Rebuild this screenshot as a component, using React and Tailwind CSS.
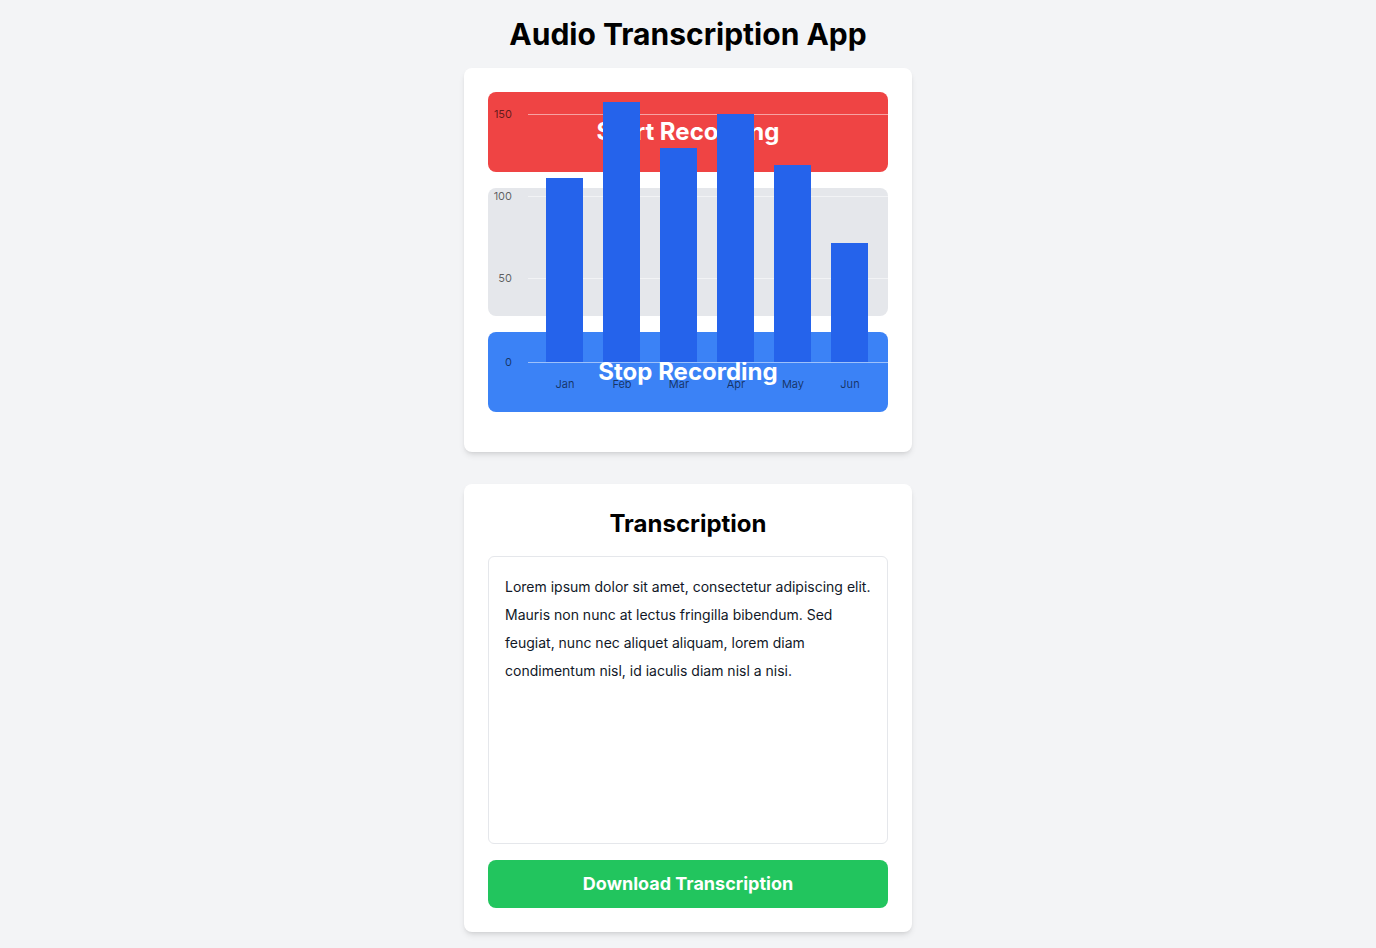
import React from 'react';

const months = [
  { label: 'Jan', x: 58, top: 86 },
  { label: 'Feb', x: 115, top: 10 },
  { label: 'Mar', x: 172, top: 56 },
  { label: 'Apr', x: 229, top: 22 },
  { label: 'May', x: 286, top: 73 },
  { label: 'Jun', x: 343, top: 151 },
];

const ticks = [
  { v: '150', y: 22 },
  { v: '100', y: 104 },
  { v: '50', y: 186 },
  { v: '0', y: 270 },
];

const Chart = () => (
  <svg width="400" height="300" className="absolute top-0 left-0 pointer-events-none">
    {ticks.map(t => (
      <g key={t.v}>
        <line x1="40" x2="400" y1={t.y + 0.5} y2={t.y + 0.5} stroke="#ffffff" strokeOpacity="0.5" strokeWidth="1" />
        <text x="24" y={t.y + 1} textAnchor="end" dominantBaseline="middle" fontSize="11" fill="#000" fillOpacity="0.6" fontFamily="Inter, sans-serif">{t.v}</text>
      </g>
    ))}
    {months.map(m => (
      <g key={m.label}>
        <rect x={m.x} y={m.top} width="37" height={270 - m.top} fill="#2563eb" />
        <text x={m.x + 19} y="293" textAnchor="middle" dominantBaseline="middle" fontSize="11" fill="#000" fillOpacity="0.6" fontFamily="Inter, sans-serif">{m.label}</text>
      </g>
    ))}
  </svg>
);

export default function App() {
  return (
    <div className="min-h-screen bg-[#f3f4f6] px-4 pt-4 pb-4 flex flex-col items-center" style={{ fontFamily: 'Inter, "Noto Sans", sans-serif' }}>
      <h1 className="text-3xl font-bold text-black mb-4">Audio Transcription App</h1>

      <div className="w-[448px] bg-white rounded-lg shadow-md p-6 pb-10 mb-8">
        <div className="relative flex flex-col gap-4">
          <button className="h-20 w-full rounded-lg bg-[#ef4444] text-white text-2xl font-bold">Start Recording</button>
          <div className="h-32 w-full rounded-lg bg-[#e5e7eb]"></div>
          <button className="h-20 w-full rounded-lg bg-[#3b82f6] text-white text-2xl font-bold">Stop Recording</button>
          <Chart />
        </div>
      </div>

      <div className="w-[448px] bg-white rounded-lg shadow-md p-6">
        <h2 className="text-2xl font-bold text-black text-center mb-4">Transcription</h2>
        <div className="h-72 w-full border border-[#e5e7eb] rounded-md p-4 text-sm leading-7 text-[#111827]">
          Lorem ipsum dolor sit amet, consectetur adipiscing elit. Mauris non nunc at lectus fringilla bibendum. Sed feugiat, nunc nec aliquet aliquam, lorem diam condimentum nisl, id iaculis diam nisl a nisi.
        </div>
        <button className="mt-4 h-12 w-full rounded-lg bg-[#22c55e] text-white text-lg font-bold">Download Transcription</button>
      </div>
    </div>
  );
}
